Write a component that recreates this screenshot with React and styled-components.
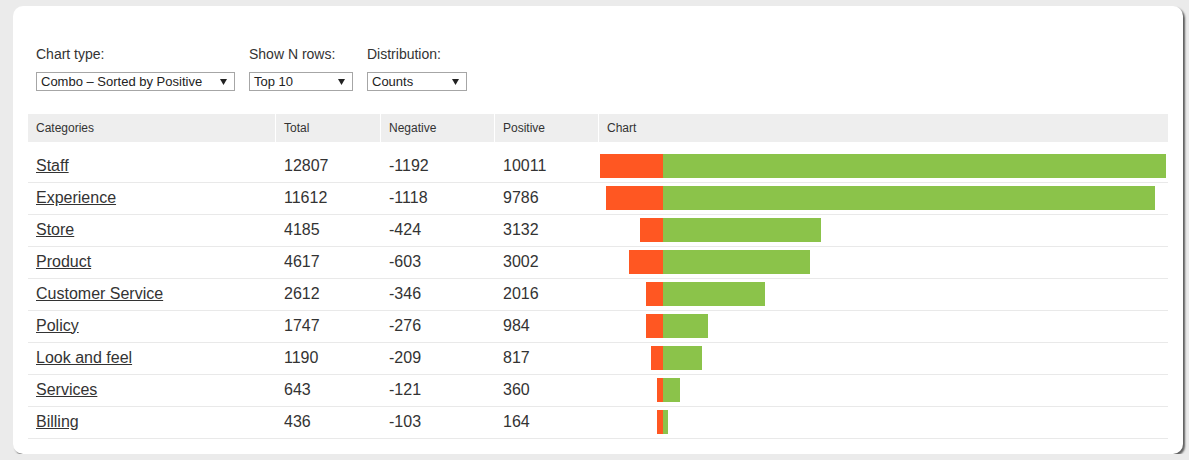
import React from 'react'
import styled, { createGlobalStyle } from 'styled-components'

const rows = [
    { name: 'Staff', total: 12807, neg: -1192, pos: 10011, negW: 63, posW: 503 },
    { name: 'Experience', total: 11612, neg: -1118, pos: 9786, negW: 57, posW: 492 },
    { name: 'Store', total: 4185, neg: -424, pos: 3132, negW: 23, posW: 158 },
    { name: 'Product', total: 4617, neg: -603, pos: 3002, negW: 34, posW: 147 },
    { name: 'Customer Service', total: 2612, neg: -346, pos: 2016, negW: 17, posW: 102 },
    { name: 'Policy', total: 1747, neg: -276, pos: 984, negW: 17, posW: 45 },
    { name: 'Look and feel', total: 1190, neg: -209, pos: 817, negW: 12, posW: 39 },
    { name: 'Services', total: 643, neg: -121, pos: 360, negW: 6, posW: 17 },
    { name: 'Billing', total: 436, neg: -103, pos: 164, negW: 6, posW: 5 }
]

const controls = [
    { label: 'Chart type:', value: 'Combo – Sorted by Positive', width: 199 },
    { label: 'Show N rows:', value: 'Top 10', width: 104 },
    { label: 'Distribution:', value: 'Counts', width: 100 }
]

const columns = ['Categories', 'Total', 'Negative', 'Positive', 'Chart']
const gridCols = '248px 105px 114px 104px 1fr'
const AXIS = 64

const GlobalStyle = createGlobalStyle`
    html, body {
        margin: 0;
        padding: 0;
        background: #ebebeb;
        font-family: "Liberation Sans", Arial, sans-serif;
        color: #333;
    }
`

const Card = styled.div`
    box-sizing: border-box;
    margin: 6px 0 0 13px;
    width: 1170px;
    height: 448px;
    background: #fff;
    border-radius: 10px;
    box-shadow: 2px 2px 2px rgba(0, 0, 0, 0.6);
    padding: 40px 15px 0 15px;
`

const Toolbar = styled.div`
    display: flex;
    gap: 14px;
    padding-left: 8px;
`

const Control = styled.div`
    display: flex;
    flex-direction: column;
    gap: 9px;
`

const Label = styled.div`
    font-size: 14px;
    line-height: 17px;
    color: #333;
`

const SelectBox = styled.div`
    box-sizing: border-box;
    width: ${props => props.width}px;
    height: 19px;
    border: 1px solid #a6a6a6;
    display: flex;
    align-items: center;
    justify-content: space-between;
    padding: 0 7px 0 4px;
    font-size: 13px;
    color: #222;
    background: #fff;
`

const Table = styled.div`
    margin-top: 23px;
    width: 1140px;
`

const HeadRow = styled.div`
    display: grid;
    grid-template-columns: ${gridCols};
    background: #eeeeee;
    height: 28px;
`

const HeadCell = styled.div`
    display: flex;
    align-items: center;
    padding-left: 8px;
    font-size: 12px;
    border-right: ${props => (props.last ? 'none' : '1px solid #fff')};
`

const Body = styled.div`
    padding-top: 9px;
`

const Row = styled.div`
    display: grid;
    grid-template-columns: ${gridCols};
    height: 32px;
    box-sizing: border-box;
    border-bottom: 1px solid #e9e9e9;
`

const Cell = styled.div`
    display: flex;
    align-items: center;
    padding: 0 0 2px 8px;
    font-size: 16px;
`

const Link = styled.a`
    color: #333;
    text-decoration: underline;
    cursor: pointer;
`

const ChartCell = styled.div`
    display: flex;
    align-items: flex-start;
    padding-top: 3px;
`

const Bars = styled.div`
    display: flex;
    width: 100%;
`

const NegSide = styled.div`
    width: ${AXIS}px;
    display: flex;
    justify-content: flex-end;
`

const Bar = styled.div`
    height: 24px;
    background: ${props => (props.negative ? '#ff5722' : '#8bc34a')};
`

const Arrow = () => (
    <svg width="7" height="6" viewBox="0 0 7 6">
        <polygon points="0,0 7,0 3.5,6" fill="#222" />
    </svg>
)

export default function App() {
    return (
        <>
            <GlobalStyle />
            <Card>
                <Toolbar>
                    {controls.map(c => (
                        <Control key={c.label}>
                            <Label>{c.label}</Label>
                            <SelectBox width={c.width}>
                                <span>{c.value}</span>
                                <Arrow />
                            </SelectBox>
                        </Control>
                    ))}
                </Toolbar>
                <Table>
                    <HeadRow>
                        {columns.map((col, i) => (
                            <HeadCell key={col} last={i === columns.length - 1}>
                                {col}
                            </HeadCell>
                        ))}
                    </HeadRow>
                    <Body>
                        {rows.map(r => (
                            <Row key={r.name}>
                                <Cell>
                                    <Link>{r.name}</Link>
                                </Cell>
                                <Cell>{r.total}</Cell>
                                <Cell>{r.neg}</Cell>
                                <Cell>{r.pos}</Cell>
                                <ChartCell>
                                    <Bars>
                                        <NegSide>
                                            <Bar negative style={{ width: r.negW }} />
                                        </NegSide>
                                        <Bar style={{ width: r.posW }} />
                                    </Bars>
                                </ChartCell>
                            </Row>
                        ))}
                    </Body>
                </Table>
            </Card>
        </>
    )
}
